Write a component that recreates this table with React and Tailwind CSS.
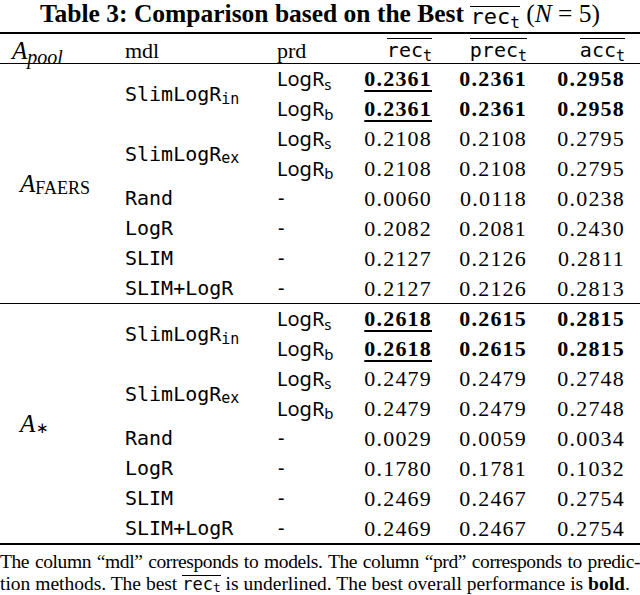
import React from 'react';

const groups = [
  {
    pool: 'FAERS',
    models: [
      { name: 'SlimLogR', sub: 'in', best: true, rows: [['s', '0.2361', '0.2361', '0.2958'], ['b', '0.2361', '0.2361', '0.2958']] },
      { name: 'SlimLogR', sub: 'ex', rows: [['s', '0.2108', '0.2108', '0.2795'], ['b', '0.2108', '0.2108', '0.2795']] },
      { name: 'Rand', rows: [[null, '0.0060', '0.0118', '0.0238']] },
      { name: 'LogR', rows: [[null, '0.2082', '0.2081', '0.2430']] },
      { name: 'SLIM', rows: [[null, '0.2127', '0.2126', '0.2811']] },
      { name: 'SLIM+LogR', rows: [[null, '0.2127', '0.2126', '0.2813']] },
    ],
  },
  {
    pool: '*',
    models: [
      { name: 'SlimLogR', sub: 'in', best: true, rows: [['s', '0.2618', '0.2615', '0.2815'], ['b', '0.2618', '0.2615', '0.2815']] },
      { name: 'SlimLogR', sub: 'ex', rows: [['s', '0.2479', '0.2479', '0.2748'], ['b', '0.2479', '0.2479', '0.2748']] },
      { name: 'Rand', rows: [[null, '0.0029', '0.0059', '0.0034']] },
      { name: 'LogR', rows: [[null, '0.1780', '0.1781', '0.1032']] },
      { name: 'SLIM', rows: [[null, '0.2469', '0.2467', '0.2754']] },
      { name: 'SLIM+LogR', rows: [[null, '0.2469', '0.2467', '0.2754']] },
    ],
  },
];

// overlined metric name, e.g. rec_t
const Metric = ({ name, size = 'text-[20px] leading-[22px]', subSize = 'text-[15px] top-[4px]' }) => (
  <span className={`inline-block border-t-[1.5px] border-black font-['DejaVu_Sans_Mono',monospace] font-normal ${size}`}>
    {name}
    <span className={`${subSize} relative`}>t</span>
  </span>
);

const PoolLabel = ({ pool }) => (
  <div className="row-span-8 flex items-center pl-[20px] font-['Liberation_Serif',serif]">
    <span className="italic text-[25px]">A</span>
    {pool === '*' ? (
      <span className="text-[15px] relative top-[5px] ml-[1px]">∗</span>
    ) : (
      <span className="text-[18px] relative top-[5px]">{pool}</span>
    )}
  </div>
);

const Group = ({ group }) => (
  <div className="grid grid-cols-[125px_152px_63px_92px_95px_98px] auto-rows-[29.875px] w-[625px]">
    <PoolLabel pool={group.pool} />
    {group.models.map((m, mi) =>
      m.rows.map((r, ri) => (
        <React.Fragment key={`${mi}-${ri}`}>
          {ri === 0 && (
            <div className={`${m.rows.length === 2 ? 'row-span-2' : ''} flex items-center font-['DejaVu_Sans_Mono',monospace] text-[20px]`}>
              {m.name}
              {m.sub && <span className="text-[15px] relative top-[5px]">{m.sub}</span>}
            </div>
          )}
          <div className="flex items-center font-['Noto_Sans',sans-serif] text-[20px]">
            {r[0] ? (
              <>
                LogR<span className="text-[15px] relative top-[5px]">{r[0]}</span>
              </>
            ) : (
              <span className="pl-[1px]">-</span>
            )}
          </div>
          {r.slice(1).map((v, vi) => (
            <div key={vi} className="flex items-center justify-end font-['Liberation_Serif',serif] text-[22px] tracking-[1.2px]">
              {m.best ? (
                <span className={`font-bold ${vi === 0 ? 'underline decoration-2 underline-offset-[4px]' : ''}`}>{v}</span>
              ) : (
                v
              )}
            </div>
          ))}
        </React.Fragment>
      ))
    )}
  </div>
);

export default function App() {
  return (
    <div className="w-[640px] h-[595px] bg-white text-black overflow-hidden">
      <div className="h-[32px] flex items-start justify-center font-['Liberation_Serif',serif] text-[25.5px] leading-[28px]">
        <span className="font-bold">Table 3: Comparison based on the Best&nbsp;</span>
        <span className="pt-[2px]">
          <Metric name="rec" size="text-[22px] leading-[20px]" subSize="text-[16px] top-[4px]" />
        </span>
        <span>&nbsp;(<i>N</i> = 5)</span>
      </div>
      <div className="h-[2px] bg-black" />
      <div className="grid grid-cols-[125px_152px_63px_92px_95px_98px] h-[29px] w-[625px] items-center font-['Liberation_Serif',serif] text-[22px]">
        <div className="pl-[12px] leading-none">
          <span className="italic text-[25px]">A</span>
          <span className="italic text-[20px] relative top-[5px]">pool</span>
        </div>
        <div>mdl</div>
        <div>prd</div>
        <div className="flex justify-end"><Metric name="rec" /></div>
        <div className="flex justify-end"><Metric name="prec" /></div>
        <div className="flex justify-end"><Metric name="acc" /></div>
      </div>
      <div className="h-[1px] bg-black" />
      <Group group={groups[0]} />
      <div className="h-[1px] bg-black" />
      <Group group={groups[1]} />
      <div className="h-[2px] bg-black" />
      <div className="mt-[6px] font-['Liberation_Serif',serif] text-[19.5px] leading-[22px]">
        <div className="text-justify [text-align-last:justify] whitespace-nowrap tracking-[-0.4px]">
          The column “mdl” corresponds to models. The column “prd” corresponds to predic-
        </div>
        <div className="whitespace-nowrap">
          tion methods. The best <Metric name="rec" size="text-[17px] leading-[17px]" subSize="text-[13px] top-[2px]" /> is underlined. The best overall performance is <b>bold</b>.
        </div>
      </div>
    </div>
  );
}
